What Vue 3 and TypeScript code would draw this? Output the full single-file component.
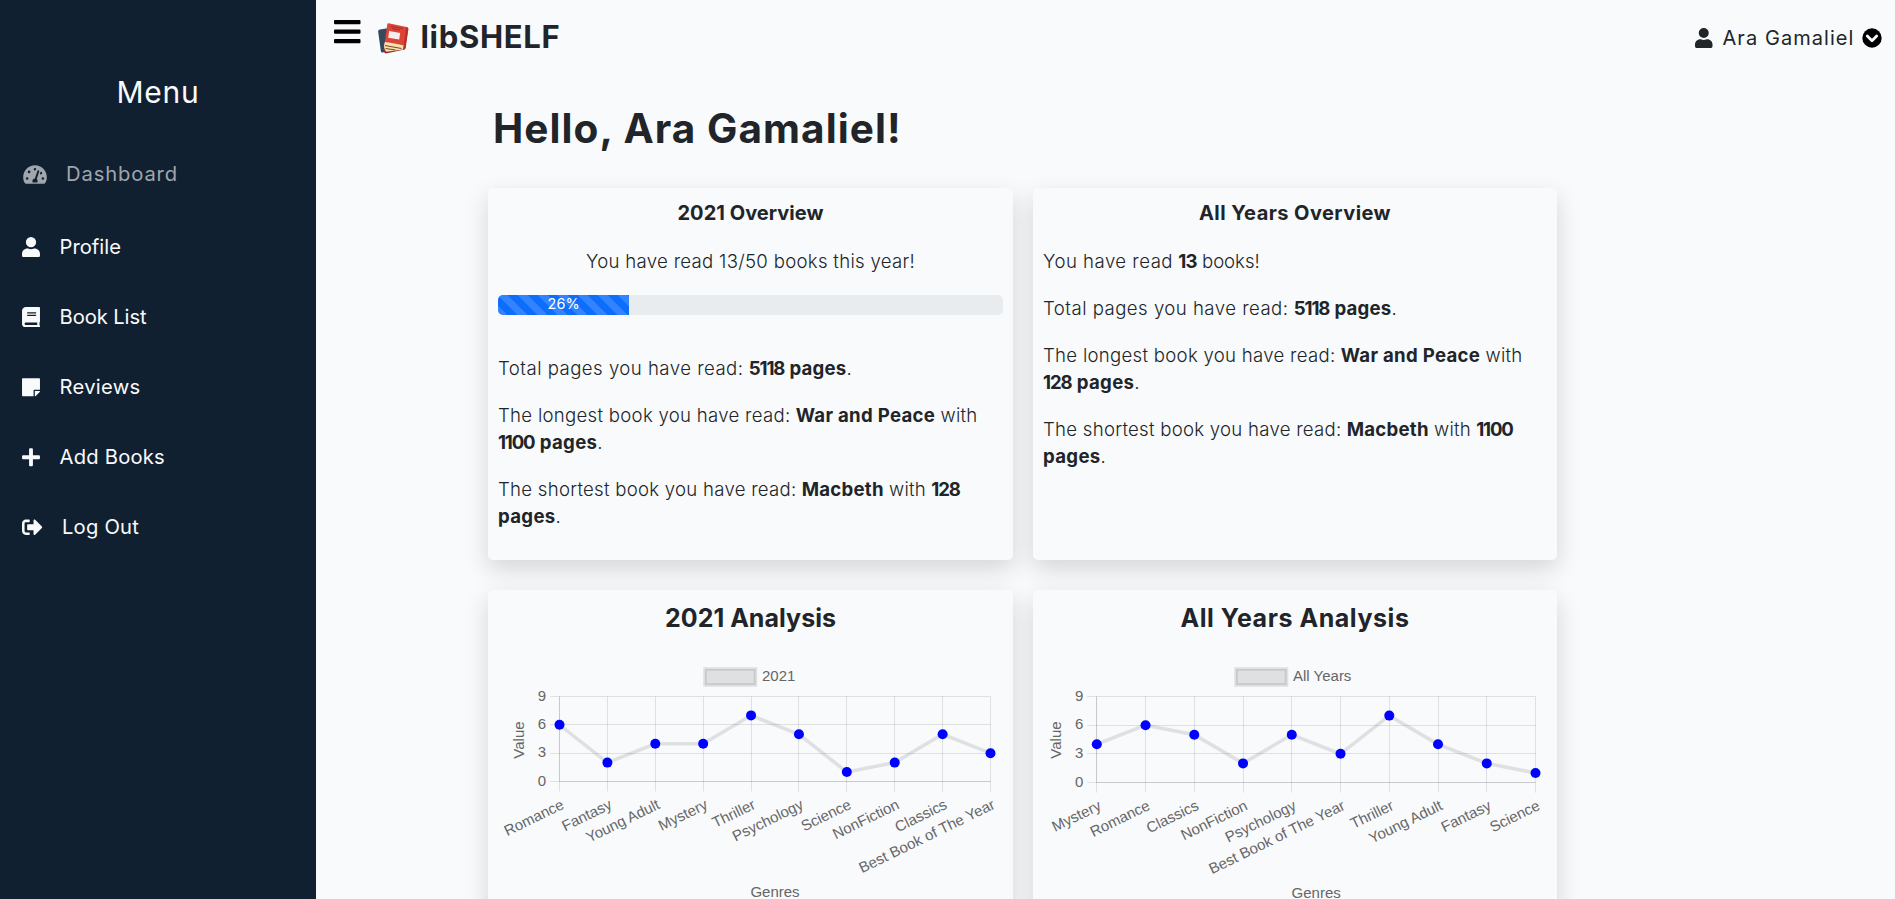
<script setup lang="ts">
import type { Directive } from 'vue'

interface NavItem { label: string; icon: string; box: string; w: number; h: number; width: number; active?: boolean }
interface Run { text: string; width: number; bold?: boolean }
interface Chart {
  title: string; titleWidth: number; legend: string; legendX: number; left: number; right: number
  bottom: number; labels: string[]; values: number[]
}

// Spreads the letters of a run so that it fills the given width.
const vFit: Directive<HTMLElement, number> = {
  mounted(el, binding) {
    const text = (el.textContent ?? '').trim()
    const style = getComputedStyle(el)
    const ctx = document.createElement('canvas').getContext('2d')
    if (!ctx) return
    ctx.font = `${style.fontWeight} ${style.fontSize} ${style.fontFamily}`
    el.style.letterSpacing = `${((binding.value - ctx.measureText(text).width) / text.length).toFixed(3)}px`
  },
}

const userPath = 'M224 256A128 128 0 1 0 224 0a128 128 0 0 0 0 256zm89.600 32h-16.700c-22.200 10.200-46.900 16-72.900 16s-50.600-5.800-72.900-16h-16.700C60.200 288 0 348.200 0 422.400V464c0 26.500 21.500 48 48 48h352c26.500 0 48-21.500 48-48v-41.600c0-74.200-60.200-134.400-134.400-134.400z'

const nav: NavItem[] = [
  { label: 'Dashboard', width: 112, w: 24, h: 21, box: '0 0 576 512', active: true, icon: 'M288 32C129 32 0 161 0 320c0 53 14 102 39 145 6 10 16 15 27 15h444c11 0 21-5 27-15 25-43 39-92 39-145C576 161 447 32 288 32zm0 64c15 0 27 10 31 23l-10 30c-5 6-13 11-21 11-18 0-32-14-32-32s14-32 32-32zM96 384a32 32 0 1 1 0-64 32 32 0 0 1 0 64zm48-160a32 32 0 1 1 0-64 32 32 0 0 1 0 64zm247-40-61 184c13 12 22 28 22 48 0 12-3 23-9 32H233c-6-9-9-20-9-32 0-34 27-62 61-64l61-183c4-13 18-20 30-16 13 5 19 18 15 31zm15 55 16-47c3-1 7-2 10-2 18 0 32 14 32 32s-14 32-32 32c-11 0-20-6-26-15zm74 145a32 32 0 1 1 0-64 32 32 0 0 1 0 64z' },
  { label: 'Profile', width: 61.5, w: 18, h: 20.5, box: '0 0 448 512', icon: userPath },
  { label: 'Book List', width: 87, w: 18, h: 20.5, box: '0 0 448 512', icon: 'M448 360V24c0-13-11-24-24-24H96C43 0 0 43 0 96v320c0 53 43 96 96 96h328c13 0 24-11 24-24v-16c0-8-4-14-9-19-4-15-4-59 0-74 5-5 9-11 9-19zM128 134c0-3 3-6 6-6h212c3 0 6 3 6 6v20c0 3-3 6-6 6H134c-3 0-6-3-6-6v-20zm0 64c0-3 3-6 6-6h212c3 0 6 3 6 6v20c0 3-3 6-6 6H134c-3 0-6-3-6-6v-20zm253 250H96a32 32 0 0 1 0-64h285c-2 17-2 47 0 64z' },
  { label: 'Reviews', width: 81, w: 18, h: 20.5, box: '0 0 448 512', icon: 'M312 320h136V56c0-13-11-24-24-24H24C11 32 0 43 0 56v400c0 13 11 24 24 24h264V344c0-13 11-24 24-24zm129 55-98 98c-4 4-11 7-17 7h-6V352h128v6c0 6-3 13-7 17z' },
  { label: 'Add Books', width: 105.500, w: 18, h: 20.5, box: '0 0 448 512', icon: 'M416 208H272V64c0-18-14-32-32-32h-32c-18 0-32 14-32 32v144H32c-18 0-32 14-32 32v32c0 18 14 32 32 32h144v144c0 18 14 32 32 32h32c18 0 32-14 32-32V304h144c18 0 32-14 32-32v-32c0-18-14-32-32-32z' },
  { label: 'Log Out', width: 77, w: 20.5, h: 20.5, box: '0 0 512 512', icon: 'm497 273-168 168c-15 15-41 5-41-17v-96H152c-13 0-24-11-24-24v-96c0-13 11-24 24-24h136V88c0-21 26-32 41-17l168 168c9 9 9 25 0 34zM192 436v-40c0-7-5-12-12-12H96c-18 0-32-14-32-32V160c0-18 14-32 32-32h84c7 0 12-5 12-12V76c0-7-5-12-12-12H96c-53 0-96 43-96 96v192c0 53 43 96 96 96h84c7 0 12-5 12-12z' },
]

const pages: Run = { text: 'pages', width: 57.5, bold: true }
const n128: Run = { text: '128', width: 28.5, bold: true }
const n1100: Run = { text: '1100', width: 36.5, bold: true }
const longest: Run[] = [{ text: 'The longest book you have read:', width: 292.5 }, { text: 'War and Peace', width: 139.5, bold: true }, { text: 'with', width: 37 }]
const shortest: Run[] = [{ text: 'The shortest book you have read:', width: 298.5 }, { text: 'Macbeth', width: 82, bold: true }, { text: 'with', width: 37 }]
const total: Run[] = [{ text: 'Total pages you have read:', width: 245.5 }, { text: '5118', width: 35.5, bold: true }, { text: 'pages', width: 57, bold: true }]

const yearStats: Run[][] = [total, [...longest, n1100, pages], [...shortest, n128, pages]]
const allStats: Run[][] = [
  [{ text: 'You have read', width: 130 }, { text: '13', width: 18.5, bold: true }, { text: 'books', width: 52.5 }],
  total,
  [...longest, n128, pages],
  [...shortest, n1100, pages],
]

const goal = { read: 13, target: 50 }
const percent = Math.round((goal.read / goal.target) * 100)

const charts: Chart[] = [
  {
    title: '2021 Analysis', titleWidth: 171, legend: '2021', legendX: 217, left: 71.5, right: 502.5, bottom: 131.5,
    labels: ['Romance', 'Fantasy', 'Young Adult', 'Mystery', 'Thriller', 'Psychology', 'Science', 'NonFiction', 'Classics', 'Best Book of The Year'],
    values: [6, 2, 4, 4, 7, 5, 1, 2, 5, 3],
  },
  {
    title: 'All Years Analysis', titleWidth: 229, legend: 'All Years', legendX: 203, left: 63.8, right: 502.5, bottom: 132.5,
    labels: ['Mystery', 'Romance', 'Classics', 'NonFiction', 'Psychology', 'Best Book of The Year', 'Thriller', 'Young Adult', 'Fantasy', 'Science'],
    values: [4, 6, 5, 2, 5, 3, 7, 4, 2, 1],
  },
]
const chartTop = 46.5
const px = (c: Chart, i: number) => c.left + ((c.right - c.left) * i) / (c.values.length - 1)
const py = (c: Chart, v: number) => c.bottom - ((c.bottom - chartTop) * v) / 9
const gridX = (c: Chart, i: number) => Math.floor(px(c, i)) + 0.5
const gridY = (c: Chart, v: number) => Math.floor(py(c, v)) + 0.5
const linePoints = (c: Chart) => c.values.map((v, i) => `${px(c, i)},${py(c, v)}`).join(' ')
</script>

<template>
  <div class="page">
    <aside class="sidebar">
      <h2 class="menu-title"><span v-fit="83">Menu</span></h2>
      <nav>
        <a v-for="item in nav" :key="item.label" class="nav-item" :class="{ active: item.active }">
          <svg :viewBox="item.box" :width="item.w" :height="item.h"><path :d="item.icon" fill-rule="evenodd" /></svg>
          <span v-fit="item.width" class="nav-label">{{ item.label }}</span>
        </a>
      </nav>
    </aside>

    <main class="main">
      <header class="topbar">
        <svg class="burger" width="27" height="24" viewBox="0 0 27 24">
          <rect width="26.500" height="4.200" rx="1" /><rect y="9.500" width="26.500" height="4.200" rx="1" /><rect y="19" width="26.500" height="4.200" rx="1" />
        </svg>
        <svg class="logo" width="31" height="31" viewBox="0 0 31 31">
          <path d="M2 6.500 11 5l6 19-12 5.500c-1.200.3-2-.4-2.200-1.800L.2 9C0 7.500.7 6.700 2 6.500z" fill="#34495e" />
          <path d="m7 19 21 4.500-1.500 3-18.500 4C4.500 30 4 22 7 19z" fill="#8f2f2c" />
          <path d="m7.500 18 19 4-1.500 4.500-16.500 2.300C6 27 5 21.500 7.500 18z" fill="#f9e2ab" />
          <path d="m7 22.500 16.500 3M7.500 25.500l10 1.500" stroke="#6f4a3a" stroke-width="1.100" fill="none" />
          <path d="M10.500.3 28.500 4c1.500.4 2 1.200 1.800 2.500L27.500 23c-6-1.500-13-3.500-20.700-4l2.500-17.700c.1-.7.500-1.100 1.200-1z" fill="#dc4437" />
          <path d="m30.300 6-2.500 18.500c-.3 1.500-1 2-2.800 2.300L28.300 4c1.200.3 1.900 1 2 2z" fill="#b83228" />
          <path d="m11.200 8 11 2-1 6.500-11-1.800z" fill="#f5eeee" />
          <path d="m13 3.300 12 2.400M14 5.500l8 1.600" stroke="#a72f29" stroke-width="1" />
        </svg>
        <span class="brand"><span v-fit="140">libSHELF</span></span>
        <div class="user">
          <svg viewBox="0 0 448 512" width="17.500" height="20"><path :d="userPath" /></svg>
          <span class="user-name"><span v-fit="132">Ara Gamaliel</span></span>
          <svg class="caret" viewBox="0 0 20 20" width="20" height="20">
            <circle cx="10" cy="10" r="9.700" /><path d="m5.300 8 4.700 4.700L14.700 8" />
          </svg>
        </div>
      </header>

      <div class="content">
        <h1 class="hello"><span v-fit="410">Hello, Ara Gamaliel!</span></h1>
        <div class="grid">
          <section class="card overview">
            <h3><span v-fit="146">2021 Overview</span></h3>
            <p class="center"><span v-fit="329">You have read {{ goal.read }}/{{ goal.target }} books this year!</span></p>
            <div class="progress">
              <div class="bar" :style="{ width: percent + '%' }">{{ percent }}%</div>
            </div>
            <p v-for="(line, i) in yearStats" :key="i"><template v-for="(run, j) in line" :key="j"><span v-if="j">{{ ' ' }}</span><component :is="run.bold ? 'b' : 'span'" v-fit="run.width">{{ run.text }}</component></template>.</p>
          </section>
          <section class="card overview">
            <h3><span v-fit="192">All Years Overview</span></h3>
            <p v-for="(line, i) in allStats" :key="i"><template v-for="(run, j) in line" :key="j"><span v-if="j">{{ ' ' }}</span><component :is="run.bold ? 'b' : 'span'" v-fit="run.width">{{ run.text }}</component></template>{{ i ? '.' : '!' }}</p>
          </section>
          <section v-for="c in charts" :key="c.title" class="card analysis">
            <h2><span v-fit="c.titleWidth">{{ c.title }}</span></h2>
            <svg class="chart" width="525" height="290" viewBox="0 0 525 290">
              <rect :x="c.legendX" y="19" width="50.500" height="16" class="legend-box" />
              <text :x="c.legendX + 57" y="31">{{ c.legend }}</text>
              <g class="gridlines">
                <line v-for="v in [0, 3, 6, 9]" :key="v" :x1="c.left - 9.600" :x2="c.right" :y1="gridY(c, v)" :y2="gridY(c, v)" />
                <line v-for="(_, i) in c.values" :key="i" :x1="gridX(c, i)" :x2="gridX(c, i)" :y1="chartTop" :y2="c.bottom + 10" />
                <path :d="`M${gridX(c, 0)} ${chartTop}V${gridY(c, 0)}H${c.right}`" />
              </g>
              <text v-for="v in [0, 3, 6, 9]" :key="v" :x="c.left - 13.500" :y="py(c, v) + 4" text-anchor="end">{{ v }}</text>
              <polyline :points="linePoints(c)" class="series" />
              <circle v-for="(v, i) in c.values" :key="i" :cx="px(c, i)" :cy="py(c, v)" r="5" class="dot" />
              <text v-for="(label, i) in c.labels" :key="label" text-anchor="end" :transform="`translate(${px(c, i) + 5.500} ${c.bottom + 26.500}) rotate(-26)`">{{ label }}</text>
              <text text-anchor="middle" :transform="`translate(${c.left - 35.500} 90) rotate(-90)`">Value</text>
              <text text-anchor="middle" :x="(c.left + c.right) / 2" :y="c.bottom + 115">Genres</text>
            </svg>
          </section>
        </div>
      </div>
    </main>
  </div>
</template>

<style>
body { background: #f8fafc; overflow: hidden; }
</style>

<style scoped>
.page {
  display: flex;
  height: 899px;
  overflow: hidden;
  background: #f8fafc;
  color: #212529;
  font-family: Inter, "Open Sans", sans-serif;
  font-size: 18.600px;
}
h1, h2, h3, p { margin: 0; }
.sidebar { width: 316px; flex: none; background: #112030; color: #f8fafc; }
.menu-title { margin-top: 70px; height: 44px; line-height: 45px; font-size: 30px; font-weight: 400; text-align: center; }
nav { margin-top: 25px; display: flex; flex-direction: column; }
.nav-item { display: flex; align-items: center; gap: 19.500px; height: 70px; padding-left: 22px; font-size: 20.200px; }
.nav-item svg { fill: currentColor; }
.nav-label { padding-bottom: 2px; }
.nav-item.active { height: 71px; margin-bottom: 2px; padding-left: 23px; color: #a0a6ac; gap: 19px; }
.main { flex: 1; min-width: 0; }
.topbar { display: flex; align-items: flex-start; height: 76px; padding: 0 13.500px 0 18px; box-sizing: border-box; }
.burger { margin-top: 20px; }
.logo { margin: 23px 0 0 16.500px; }
.brand { margin: 14px 0 0 12px; line-height: 46px; font-size: 31px; font-weight: 650; }
.user { display: flex; align-items: center; margin: 18px 0 0 auto; height: 40px; font-size: 20px; }
.user-name { margin: 0 7px 0 10px; }
.user > svg:first-child { fill: #212529; }
.caret path { fill: none; stroke: #f8fafc; stroke-width: 2.800; stroke-linecap: round; stroke-linejoin: round; }
.content { margin-left: 172px; width: 1069px; }
.hello { height: 112px; padding: 23px 0 0 5px; box-sizing: border-box; line-height: 60px; font-size: 40.500px; font-weight: 700; }
.grid { display: grid; grid-template-columns: 525px 524px; column-gap: 20px; row-gap: 30px; }
.card { border-radius: 5px; background: #f8fafc; box-shadow: 0 9px 24px rgba(0, 0, 0, .15); }
.overview { height: 372px; padding: 10px 10px 0; box-sizing: border-box; font-weight: 300; line-height: 27px; }
.overview h3 { height: 30px; line-height: 30px; margin-bottom: 20px; font-size: 20px; font-weight: 700; text-align: center; }
.overview p { margin-bottom: 20px; }
.center { text-align: center; }
b { font-weight: 700; }
.progress { height: 20px; margin-bottom: 40px; border-radius: 5px; overflow: hidden; background: #e9ecef; }
.bar {
  height: 100%;
  line-height: 18px;
  color: #fff;
  font-size: 14.500px;
  font-weight: 400;
  text-align: center;
  background: linear-gradient(45deg, rgba(255,255,255,.15) 25%, transparent 25%, transparent 50%, rgba(255,255,255,.15) 50%, rgba(255,255,255,.15) 75%, transparent 75%) 0 0 / 20px 20px #0d6efd;
}
.analysis { height: 360px; }
.analysis h2 { height: 60px; line-height: 56px; font-size: 25px; font-weight: 700; text-align: center; }
.chart { display: block; font-family: "Liberation Sans", Arial, sans-serif; font-size: 15px; }
.chart text { fill: #666; }
.legend-box { fill: rgba(0, 0, 0, .1); stroke: rgba(0, 0, 0, .1); stroke-width: 3.600; }
.gridlines line, .gridlines path { fill: none; stroke: rgba(0, 0, 0, .1); stroke-width: 1; }
.series { fill: none; stroke: rgba(0, 0, 0, .1); stroke-width: 3.600; }
.dot { fill: #0000ff; }
</style>
